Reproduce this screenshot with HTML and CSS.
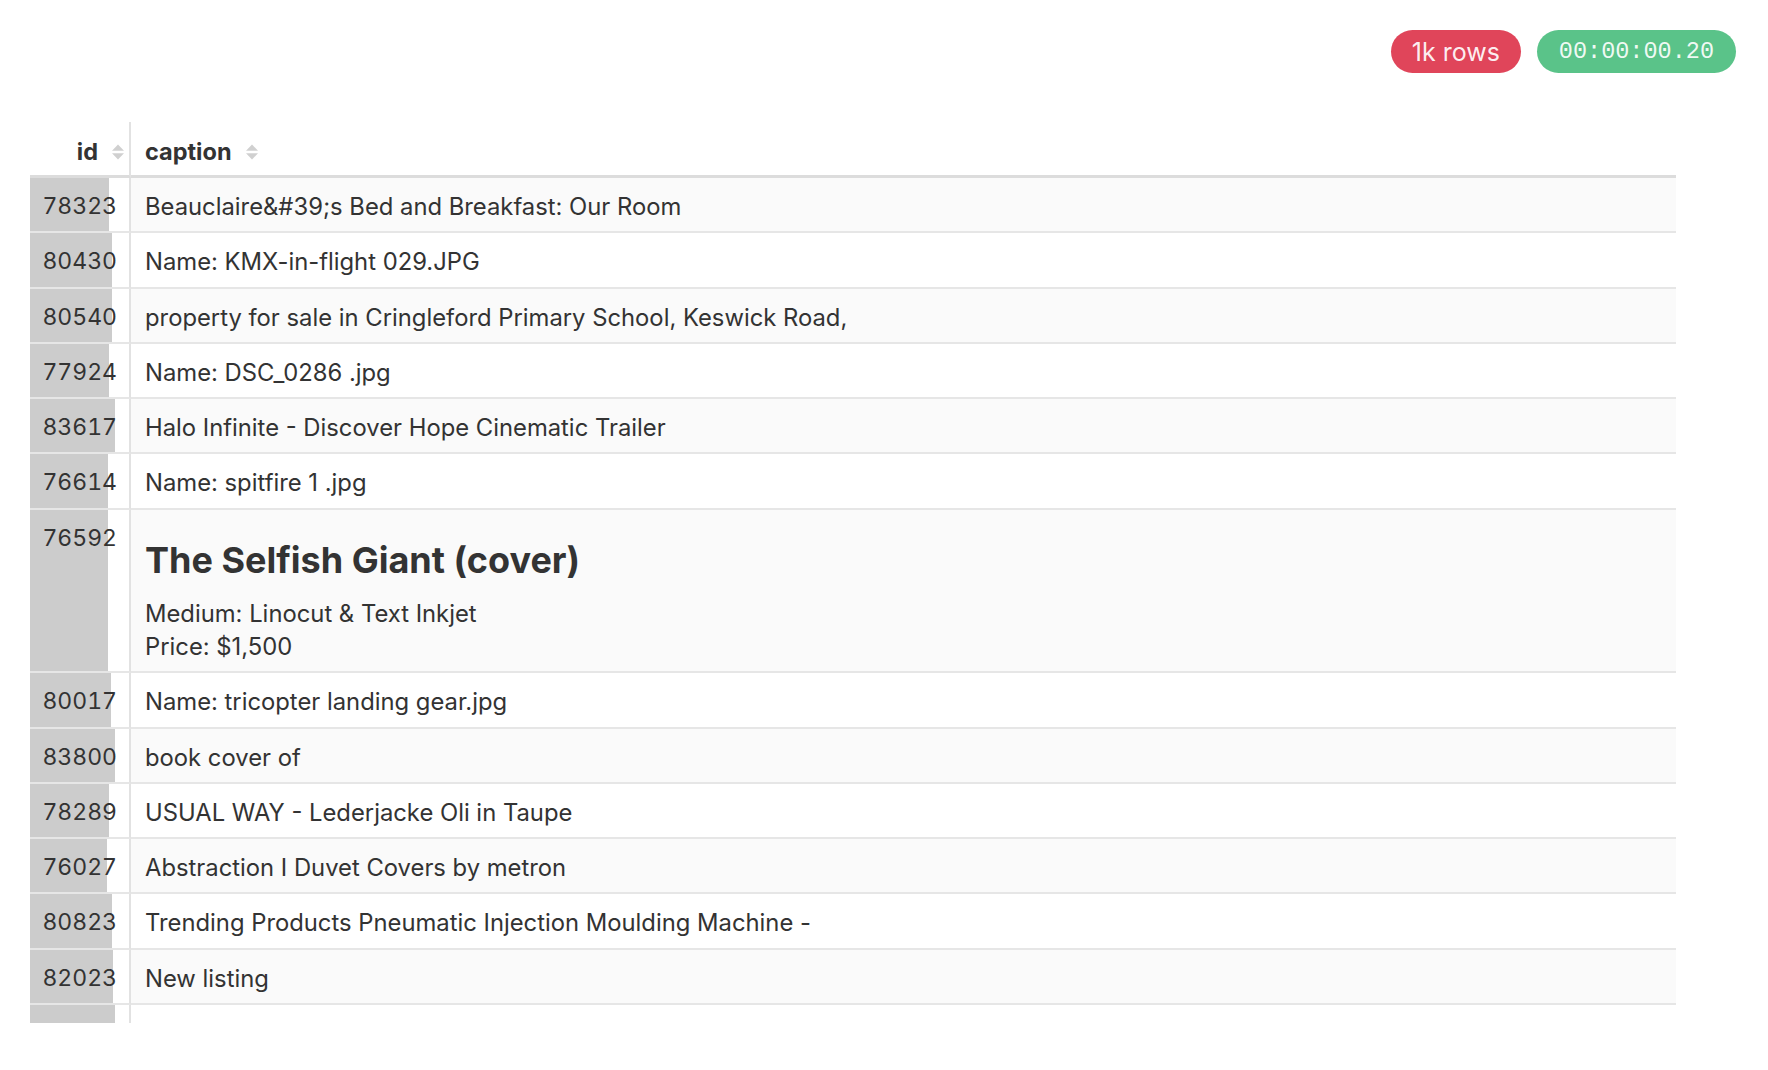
FILE: index.html
```html
<!DOCTYPE html>
<html lang="en">
<head>
<meta charset="utf-8">
<title>Table</title>
<link rel="stylesheet" href="styles.css">
</head>
<body>
<div class="page">
  <div class="badges">
    <span class="badge badge-rows">1k rows</span>
    <span class="badge badge-time">00:00:00.20</span>
  </div>
  <div class="scroller">
    <table class="grid">
      <colgroup><col class="c-id"><col class="c-cap"></colgroup>
      <thead>
        <tr>
          <th class="col-id"><span class="th-inner"><span class="th-label">id</span><svg class="sort" viewBox="0 0 12 16"><path d="M6 0.5 L12 6.8 L0 6.8 Z"/><path d="M6 15.5 L12 9.2 L0 9.2 Z"/></svg></span></th>
          <th class="col-caption"><span class="th-inner"><span class="th-label">caption</span><svg class="sort" viewBox="0 0 12 16"><path d="M6 0.5 L12 6.8 L0 6.8 Z"/><path d="M6 15.5 L12 9.2 L0 9.2 Z"/></svg></span></th>
        </tr>
      </thead>
      <tbody>
        <tr><td class="id"><span class="bar" style="width:79px"></span><span class="num">78323</span></td><td class="cap">Beauclaire&amp;#39;s Bed and Breakfast: Our Room</td></tr>
        <tr><td class="id"><span class="bar" style="width:82px"></span><span class="num">80430</span></td><td class="cap">Name: KMX-in-flight 029.JPG</td></tr>
        <tr><td class="id"><span class="bar" style="width:82px"></span><span class="num">80540</span></td><td class="cap">property for sale in Cringleford Primary School, Keswick Road,</td></tr>
        <tr><td class="id"><span class="bar" style="width:79px"></span><span class="num">77924</span></td><td class="cap">Name: DSC_0286 .jpg</td></tr>
        <tr><td class="id"><span class="bar" style="width:85px"></span><span class="num">83617</span></td><td class="cap">Halo Infinite - Discover Hope Cinematic Trailer</td></tr>
        <tr><td class="id"><span class="bar" style="width:78px"></span><span class="num">76614</span></td><td class="cap">Name: spitfire 1 .jpg</td></tr>
        <tr class="tall"><td class="id"><span class="bar" style="width:78px"></span><span class="num">76592</span></td><td class="cap"><h3 class="cap-title">The Selfish Giant (cover)</h3><p class="cap-text">Medium: Linocut &amp; Text Inkjet<br>Price: $1,500</p></td></tr>
        <tr><td class="id"><span class="bar" style="width:81px"></span><span class="num">80017</span></td><td class="cap">Name: tricopter landing gear.jpg</td></tr>
        <tr><td class="id"><span class="bar" style="width:85px"></span><span class="num">83800</span></td><td class="cap">book cover of</td></tr>
        <tr><td class="id"><span class="bar" style="width:79px"></span><span class="num">78289</span></td><td class="cap">USUAL WAY - Lederjacke Oli in Taupe</td></tr>
        <tr><td class="id"><span class="bar" style="width:77px"></span><span class="num">76027</span></td><td class="cap">Abstraction I Duvet Covers by metron</td></tr>
        <tr><td class="id"><span class="bar" style="width:82px"></span><span class="num">80823</span></td><td class="cap">Trending Products Pneumatic Injection Moulding Machine -</td></tr>
        <tr><td class="id"><span class="bar" style="width:83px"></span><span class="num">82023</span></td><td class="cap">New listing</td></tr>
        <tr><td class="id"><span class="bar" style="width:85px"></span><span class="num">83410</span></td><td class="cap">Professional kitchen with stainless steel appliances</td></tr>
      </tbody>
    </table>
  </div>
</div>
</body>
</html>
```

FILE: styles.css
```css
html, body {
  margin: 0;
  padding: 0;
  background: #ffffff;
}

body {
  font-family: Inter, "Noto Sans", "Liberation Sans", sans-serif;
  color: #333333;
}

.page {
  padding-top: 30px;
}

.badges {
  display: flex;
  justify-content: flex-end;
  gap: 16px;
  padding-right: 32px;
}

.badge {
  display: inline-block;
  height: 43px;
  line-height: 44px;
  padding: 0 21px;
  border-radius: 22px;
  font-size: 25px;
  color: rgba(255, 255, 255, 0.92);
}

.badge-rows {
  background: #e0455a;
}

.badge-time {
  background: #5ac389;
  font-family: "Liberation Mono", "DejaVu Sans Mono", monospace;
  font-size: 23.5px;
  padding: 0 22px;
}

.scroller {
  margin-top: 49px;
  margin-left: 30px;
  width: 1646px;
  height: 901px;
  overflow: hidden;
}

.grid {
  width: 100%;
  table-layout: fixed;
  border-collapse: separate;
  border-spacing: 0;
  font-size: 23.8px;
}

.c-id {
  width: 101px;
}

.grid th {
  height: 56px;
  padding: 6px 0 0 0;
  box-sizing: border-box;
  font-weight: 700;
  font-size: 23.5px;
  color: #333333;
  border-bottom: 3px solid #dcdcdc;
  vertical-align: middle;
  white-space: nowrap;
}

.grid th.col-id {
  text-align: right;
  padding-right: 5px;
  border-right: 2px solid #e2e2e2;
}

.grid th.col-caption {
  text-align: left;
  padding-left: 14px;
}

.th-inner {
  display: inline-flex;
  align-items: center;
}

.sort {
  width: 12px;
  height: 16px;
  margin-left: 14px;
  fill: #d0d0d0;
}

.grid tbody tr {
  background: #ffffff;
}

.grid tbody tr:nth-child(odd) {
  background: #fafafa;
}

.grid td {
  border-bottom: 2px solid #e6e6e6;
  padding: 12px 14px 8.25px 14px;
  line-height: 33px;
  vertical-align: top;
}

.grid td.id {
  position: relative;
  padding-left: 0;
  padding-right: 12px;
  text-align: right;
  border-right: 2px solid #e2e2e2;
  background: #ffffff;
  font-size: 23px;
  font-variant-numeric: tabular-nums;
}

.bar {
  position: absolute;
  left: 0;
  top: 0;
  bottom: 0;
  background: #cccccc;
}

.num {
  position: relative;
}

.cap {
  white-space: nowrap;
}

.cap-title {
  margin: 16px 0 15.5px 0;
  font-size: 36px;
  line-height: 44px;
  font-weight: 700;
}

.cap-text {
  margin: 0;
  line-height: 33px;
}
```
